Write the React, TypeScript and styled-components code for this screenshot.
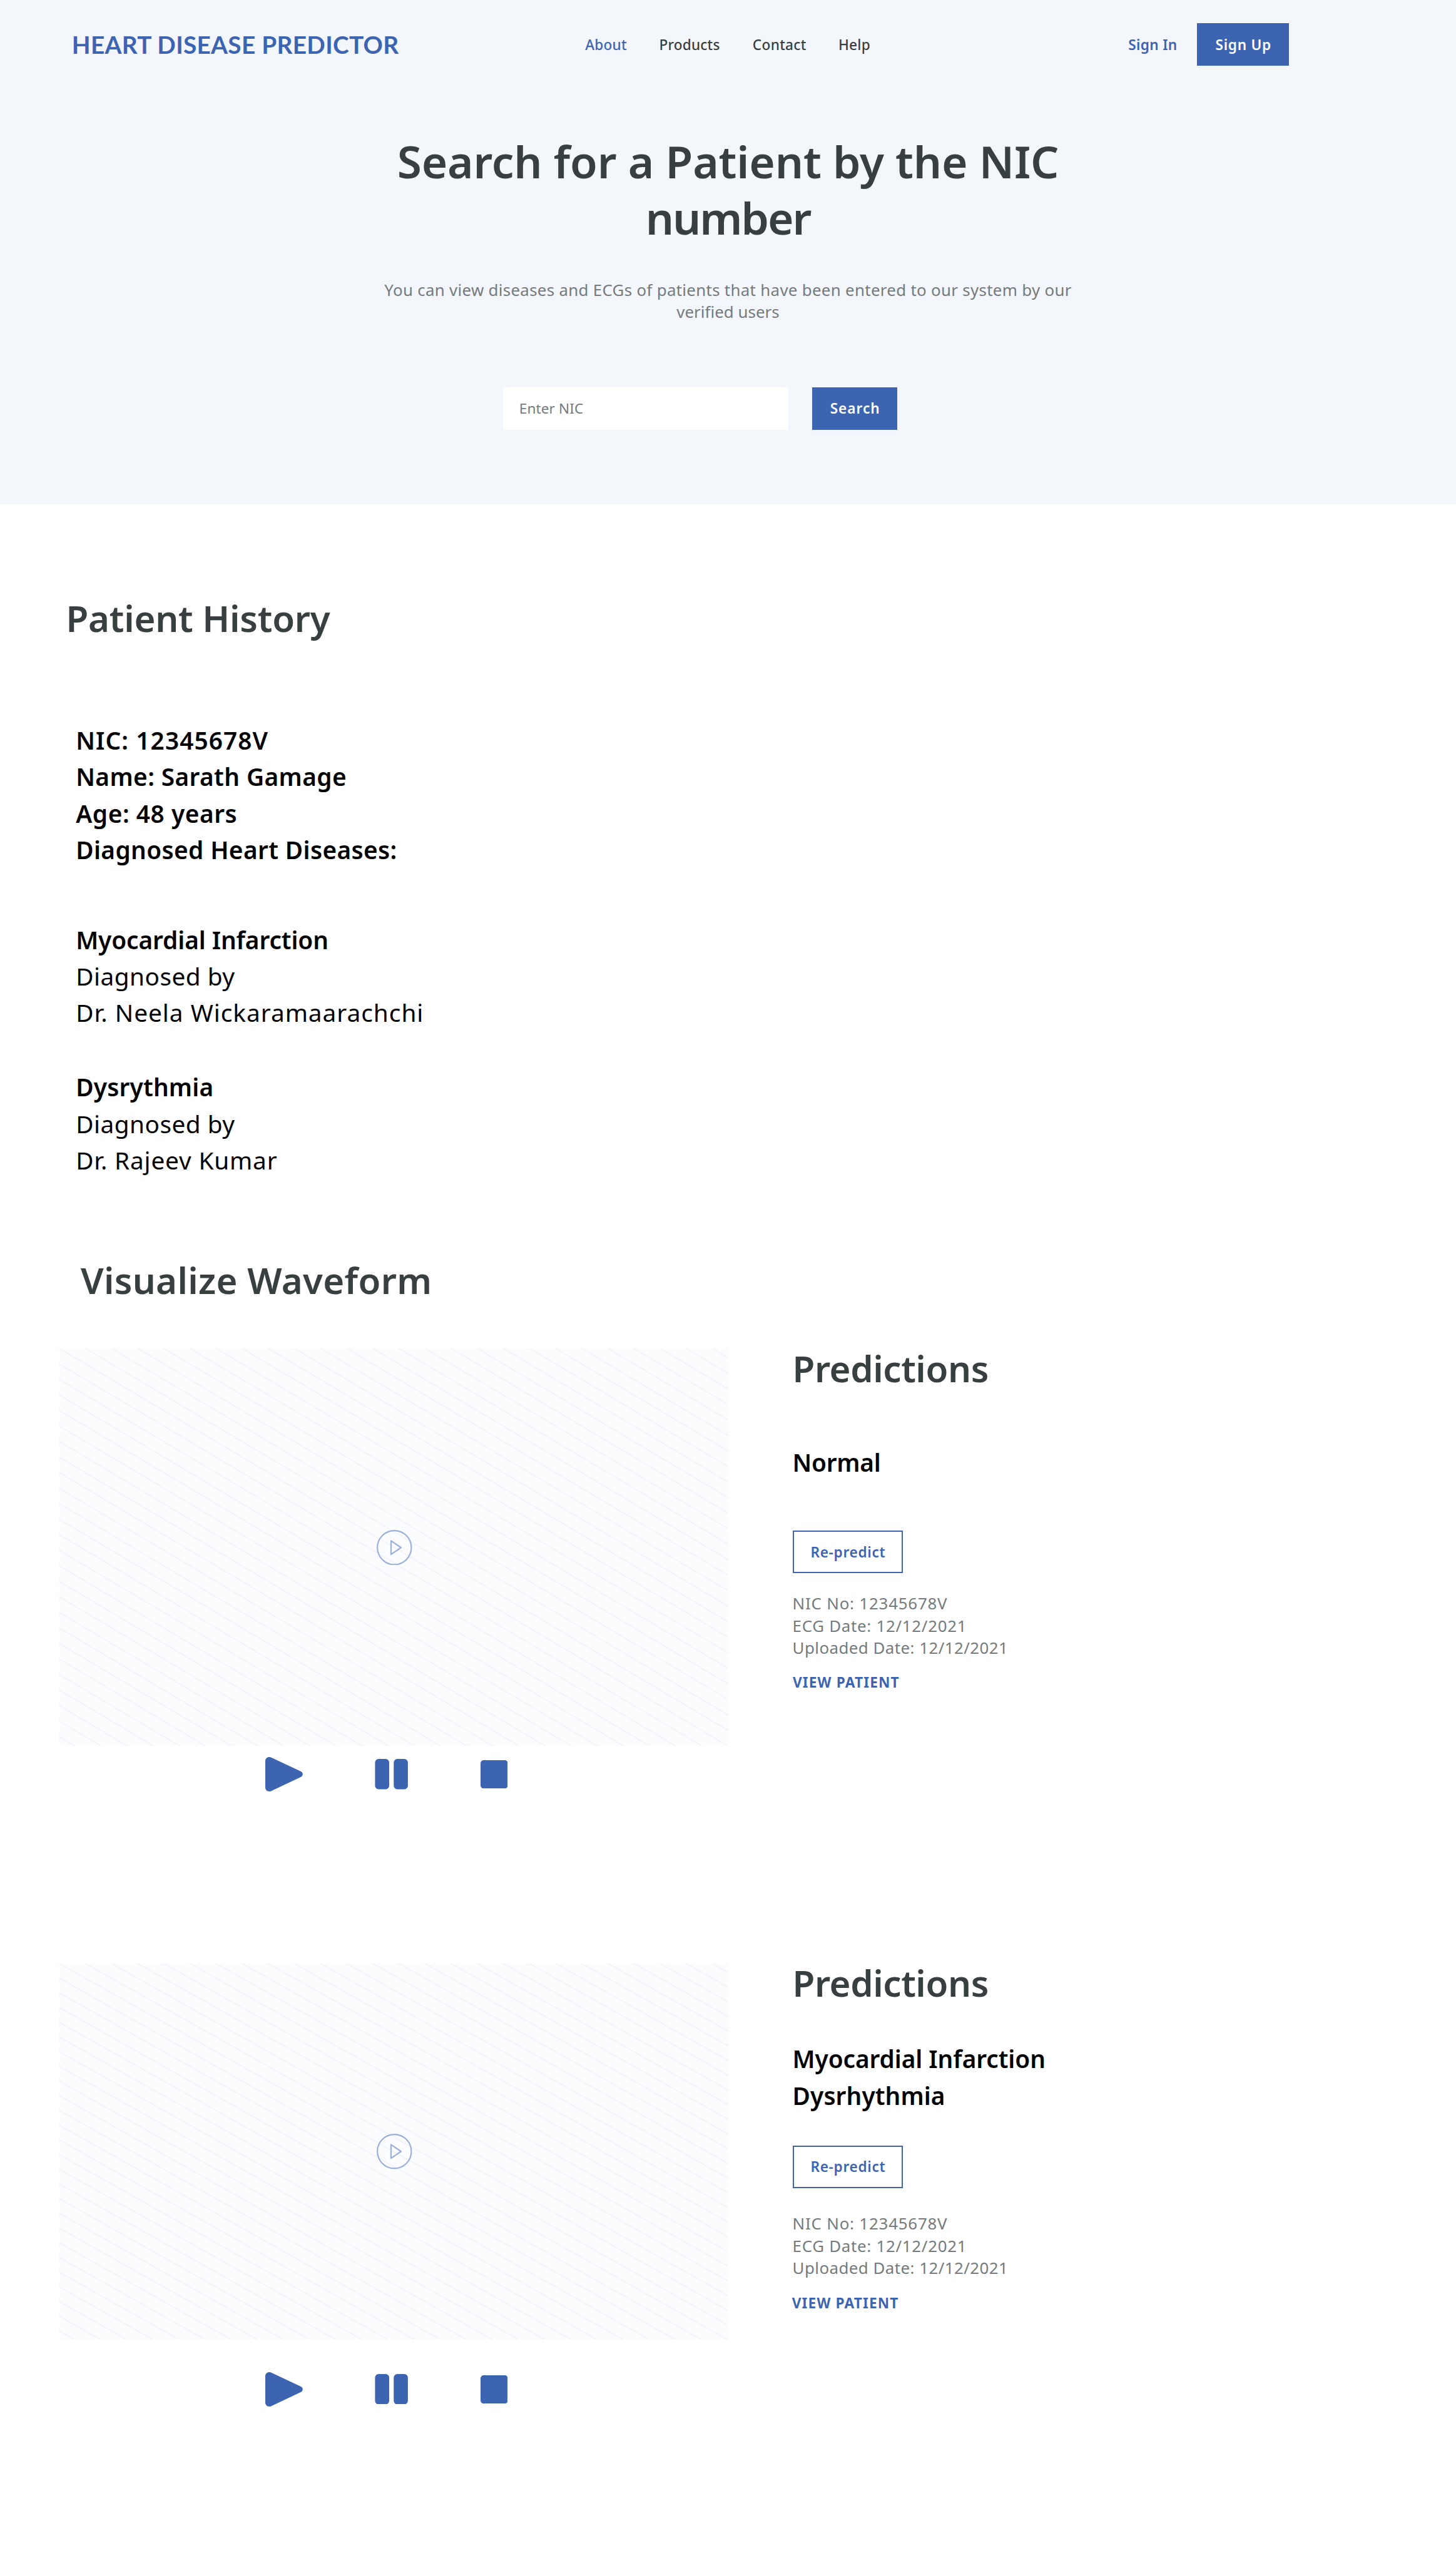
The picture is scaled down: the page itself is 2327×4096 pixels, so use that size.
import React from "react";
import styled, { createGlobalStyle, css } from "styled-components";

/* Design units: 20 units make one rem. */
const u = (n: number) => `${n / 20}rem`;

const color = {
  brand: "#3c64b1",
  brandSoft: "#9bb0d9",
  ink: "#373f41",
  muted: "#737b7d",
  tint: "#f3f6fb",
  panel: "#fbfcfe",
  stripe: "#f1f3f8",
};

const GlobalStyle = createGlobalStyle`
  *, *::before, *::after { box-sizing: border-box; }
  html { font-size: 16.16px; }
  body {
    margin: 0;
    background: #fff;
    font-family: "Noto Sans", "Open Sans", sans-serif;
    color: #000;
    overflow-x: hidden;
  }
  h1, h2, p { margin: 0; }
`;

interface Tracked {
  $track?: number;
}

const tracking = css<Tracked>`
  letter-spacing: ${({ $track = 0 }) => u($track)};
`;

const Page = styled.div`
  width: 100%;
  height: ${u(5069)};
  overflow: hidden;
`;

const Hero = styled.header`
  height: ${u(998)};
  background: ${color.tint};
`;

const NavBar = styled.nav`
  display: flex;
  align-items: center;
  height: ${u(176)};
  padding: 0 ${u(330)} 0 ${u(142)};
`;

const Brand = styled.div<Tracked>`
  width: ${u(1015.6)};
  font-family: Lato, sans-serif;
  font-size: ${u(48)};
  font-weight: 700;
  line-height: ${u(60)};
  color: ${color.brand};
  white-space: nowrap;
  ${tracking}
`;

const NavLinks = styled.div`
  display: grid;
  grid-template-columns: ${u(146.2)} ${u(184.9)} ${u(169.7)} auto;
`;

const NavLink = styled.a<Tracked & { $active?: boolean }>`
  font-size: ${u(28)};
  font-weight: 500;
  line-height: ${u(36)};
  color: ${({ $active }) => ($active ? color.brand : color.ink)};
  ${tracking}
`;

const Account = styled.div`
  display: flex;
  align-items: center;
  margin-left: auto;
`;

const SignIn = styled.a<Tracked>`
  width: ${u(136.3)};
  font-size: ${u(28)};
  font-weight: 600;
  line-height: ${u(36)};
  color: ${color.brand};
  ${tracking}
`;

const Button = styled.button<Tracked & { $width: number; $outline?: boolean }>`
  display: flex;
  align-items: center;
  justify-content: center;
  width: ${({ $width }) => u($width)};
  height: ${u(84)};
  padding: 0 0 0 ${u(1)};
  border: ${({ $outline }) => ($outline ? `2px solid ${color.brand}` : "0")};
  border-radius: 0;
  background: ${({ $outline }) => ($outline ? "transparent" : color.brand)};
  color: ${({ $outline }) => ($outline ? color.brand : "#fff")};
  font-family: inherit;
  font-size: ${u(28)};
  font-weight: 600;
  ${tracking}
`;

const Title = styled.h1`
  margin-top: ${u(87.5)};
  font-size: ${u(88)};
  font-weight: 600;
  line-height: ${u(112)};
  text-align: center;
  color: ${color.ink};
`;

const Subtitle = styled.p`
  margin-top: ${u(64)};
  font-size: ${u(32)};
  line-height: ${u(44)};
  text-align: center;
  color: ${color.muted};
`;

const Line = styled.span<Tracked>`
  display: block;
  white-space: nowrap;
  ${tracking}
`;

const SearchForm = styled.div`
  display: flex;
  gap: ${u(48)};
  margin: ${u(126.5)} 0 0 ${u(995)};
`;

const NicInput = styled.input<Tracked>`
  width: ${u(564)};
  height: ${u(84)};
  padding: 0 ${u(32)};
  border: 0;
  border-radius: 0;
  background: #fff;
  font-family: inherit;
  font-size: ${u(28)};
  ${tracking}

  &::placeholder {
    color: ${color.muted};
    opacity: 1;
  }
`;

const SectionTitle = styled.h2<Tracked & { $top?: number; $left?: number }>`
  margin: ${({ $top = 0 }) => u($top)} 0 0 ${({ $left = 0 }) => u($left)};
  font-size: ${u(72)};
  font-weight: 600;
  line-height: ${u(90)};
  color: ${color.ink};
  white-space: nowrap;
  ${tracking}
`;

const History = styled.section`
  padding-left: ${u(150)};
`;

const TextBlock = styled.div<{ $top: number }>`
  margin-top: ${({ $top }) => u($top)};
  font-size: ${u(48)};
  line-height: ${u(72)};
`;

const Strong = styled(Line)`
  font-weight: 600;
`;

const Record = styled.section`
  display: grid;
  grid-template-columns: ${u(1322)} 1fr;
  column-gap: ${u(127.5)};
  height: ${u(1216)};
  padding-left: ${u(118)};
`;

const Player = styled.div`
  padding-top: ${u(7)};
`;

const Video = styled.div<{ $height: number }>`
  display: grid;
  place-items: center;
  height: ${({ $height }) => u($height)};
  background: ${color.panel};

  & > * {
    grid-area: 1 / 1;
  }
`;

const StripeArt = styled.svg`
  width: 100%;
  height: 100%;
  display: block;
`;

const PlayBadge = styled.svg`
  width: ${u(70)};
  height: ${u(70)};
  margin-left: ${u(2)};
`;

const Controls = styled.div<{ $top: number }>`
  display: flex;
  align-items: center;
  gap: ${u(142.5)};
  margin-top: ${({ $top }) => u($top)};
  padding-left: ${u(407)};
  color: ${color.brand};
`;

const Glyph = styled.svg<{ $w: number; $h: number }>`
  width: ${({ $w }) => u($w)};
  height: ${({ $h }) => u($h)};
  fill: currentColor;
`;

const Details = styled.div`
  display: flex;
  flex-direction: column;
  align-items: flex-start;
  padding-top: ${u(1.5)};
`;

const Action = styled.div<{ $top: number }>`
  margin: ${({ $top }) => u($top)} 0 0 ${u(0.5)};
`;

const Records = styled.div`
  margin-top: ${u(82.5)};
`;

const Meta = styled.div<{ $top: number }>`
  margin-top: ${({ $top }) => u($top)};
  font-size: ${u(32)};
  line-height: ${u(44)};
  color: ${color.muted};
`;

const ViewLink = styled.a<Tracked & { $top: number; $shift: number }>`
  margin: ${({ $top }) => u($top)} 0 0 ${({ $shift }) => u($shift)};
  font-size: ${u(28)};
  font-weight: 700;
  line-height: ${u(40)};
  color: ${color.brand};
  ${tracking}
`;

const STRIPES = 25.59;

function Stripes({ height }: { height: number }) {
  const w = 1322;
  const stepX = w / STRIPES;
  const stepY = height / STRIPES;
  const lines = [];
  for (let k = -25; k <= 25; k++) {
    lines.push(
      k >= 0 ? (
        <line key={k} x1={k * stepX - w} y1={-height} x2={k * stepX + w} y2={height} />
      ) : (
        <line key={k} x1={-w} y1={-k * stepY - height} x2={w} y2={-k * stepY + height} />
      )
    );
  }
  return (
    <StripeArt viewBox={`0 0 ${w} ${height}`} preserveAspectRatio="none">
      <g stroke={color.stripe} strokeWidth="2">
        {lines}
      </g>
    </StripeArt>
  );
}

interface RecordData {
  videoHeight: number;
  controlsTop: number;
  results: [string, number][];
  resultsTop: number;
  actionTop: number;
  metaTop: number;
  linkTop: number;
  linkShift: number;
}

const records: RecordData[] = [
  {
    videoHeight: 786,
    controlsTop: 22,
    results: [["Normal", -0.28]],
    resultsTop: 104.4,
    actionTop: 99.1,
    metaTop: 38.8,
    linkTop: 26,
    linkShift: 0.5,
  },
  {
    videoHeight: 744,
    controlsTop: 64,
    results: [
      ["Myocardial Infarction", -0.06],
      ["Dysrhythmia", 0.14],
    ],
    resultsTop: 68.4,
    actionTop: 63.1,
    metaTop: 49.1,
    linkTop: 27,
    linkShift: -1,
  },
];

function EcgRecord({ data }: { data: RecordData }) {
  return (
    <Record>
      <Player>
        <Video $height={data.videoHeight}>
          <Stripes height={data.videoHeight} />
          <PlayBadge viewBox="0 0 70 70" fill="none" stroke={color.brandSoft} strokeWidth="2.7">
            <circle cx="35" cy="35" r="33.6" />
            <path d="M28.4 21.6 48.2 35 28.4 48.4Z" strokeLinejoin="round" />
          </PlayBadge>
        </Video>
        <Controls $top={data.controlsTop}>
          <Glyph $w={74} $h={68} viewBox="0 0 74 68">
            <path d="M0 8C0 3 3.500 0 8 0Q10.500 0 12.500 1.200L70 28.300Q74 30.500 74 34T70 39.700L12.500 66.800Q10.500 68 8 68C3.500 68 0 65 0 60Z" />
          </Glyph>
          <Glyph $w={66} $h={60} viewBox="0 0 66 60">
            <rect x="0.500" width="28" height="60" rx="7" />
            <rect x="37.500" width="28" height="60" rx="7" />
          </Glyph>
          <Glyph $w={54} $h={56} viewBox="0 0 54 56">
            <rect width="54" height="56" rx="6" />
          </Glyph>
        </Controls>
      </Player>
      <Details>
        <SectionTitle $track={-0.48}>Predictions</SectionTitle>
        <TextBlock $top={data.resultsTop}>
          {data.results.map(([name, track]) => (
            <Strong key={name} $track={track}>
              {name}
            </Strong>
          ))}
        </TextBlock>
        <Action $top={data.actionTop}>
          <Button $width={218} $track={0.88} $outline>
            Re-predict
          </Button>
        </Action>
        <Meta $top={data.metaTop}>
          <Line $track={1}>NIC No: 12345678V</Line>
          <Line $track={0.9}>ECG Date: 12/12/2021</Line>
          <Line $track={0.58}>Uploaded Date: 12/12/2021</Line>
        </Meta>
        <ViewLink $top={data.linkTop} $shift={data.linkShift} $track={1.45}>
          VIEW PATIENT
        </ViewLink>
      </Details>
    </Record>
  );
}

export default function App() {
  return (
    <Page>
      <GlobalStyle />
      <Hero>
        <NavBar>
          <Brand $track={0.38}>HEART DISEASE PREDICTOR</Brand>
          <NavLinks>
            <NavLink $active $track={0.24}>About</NavLink>
            <NavLink $track={0.23}>Products</NavLink>
            <NavLink $track={0.39}>Contact</NavLink>
            <NavLink $track={0.29}>Help</NavLink>
          </NavLinks>
          <Account>
            <SignIn $track={0.41}>Sign In</SignIn>
            <Button $width={182} $track={0.92}>Sign Up</Button>
          </Account>
        </NavBar>
        <Title>
          <Line $track={-0.19}>Search for a Patient by the NIC</Line>
          <Line $track={-2.6}>number</Line>
        </Title>
        <Subtitle>
          <Line $track={0.39}>
            You can view diseases and ECGs of patients that have been entered to our system by our
          </Line>
          <Line $track={0.07}>verified users</Line>
        </Subtitle>
        <SearchForm>
          <NicInput placeholder="Enter NIC" $track={0.1} />
          <Button $width={168} $track={1.26}>Search</Button>
        </SearchForm>
      </Hero>

      <SectionTitle $top={180.5} $left={130.5} $track={-0.28}>Patient History</SectionTitle>
      <History>
        <TextBlock $top={160}>
          <Strong $track={1.37}>NIC: 12345678V</Strong>
          <Strong $track={0.51}>Name: Sarath Gamage</Strong>
          <Strong $track={0.7}>Age: 48 years</Strong>
          <Strong $track={0.48}>Diagnosed Heart Diseases:</Strong>
        </TextBlock>
        <TextBlock $top={106}>
          <Strong $track={-0.1}>Myocardial Infarction</Strong>
          <Line $track={0.6}>Diagnosed by</Line>
          <Line $track={1.22}>Dr. Neela Wickaramaarachchi</Line>
        </TextBlock>
        <TextBlock $top={76}>
          <Strong $track={0.25}>Dysrythmia</Strong>
          <Line $track={0.6}>Diagnosed by</Line>
          <Line $track={1.02}>Dr. Rajeev Kumar</Line>
        </TextBlock>
      </History>

      <SectionTitle $top={157.6} $left={159.5} $track={0.39}>Visualize Waveform</SectionTitle>
      <Records>
        {records.map((data) => (
          <EcgRecord key={data.videoHeight} data={data} />
        ))}
      </Records>
    </Page>
  );
}
